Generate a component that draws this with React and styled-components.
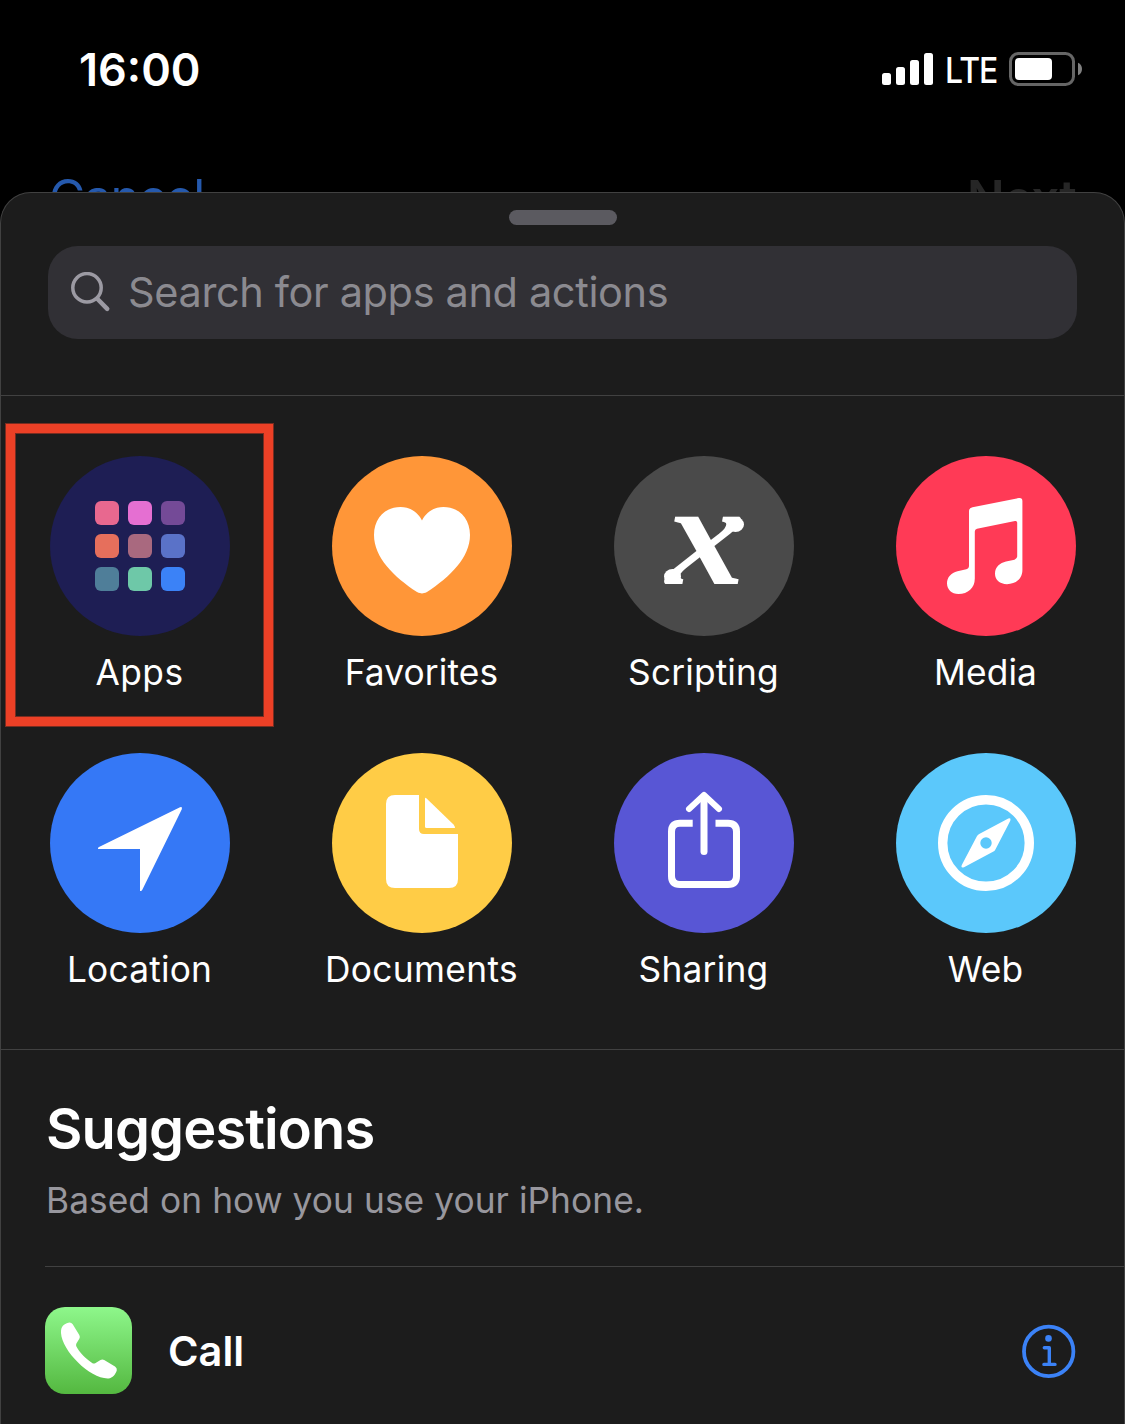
import React from "react";
import styled, { createGlobalStyle } from "styled-components";

const GlobalStyle = createGlobalStyle`
  * { box-sizing: border-box; }
  body { margin: 0; background: #000; }
`;

const Screen = styled.div`
  width: 1125px;
  height: 1424px;
  overflow: hidden;
  display: flex;
  flex-direction: column;
  background: #000;
  color: #fff;
  font-family: Inter, "Liberation Sans", sans-serif;
  white-space: nowrap;
`;

const Text = styled.span`
  font-size: ${(p) => p.$size}px;
  font-weight: ${(p) => p.$weight || 400};
  letter-spacing: ${(p) => p.$track || 0}px;
  line-height: ${(p) => p.$line}px;
  color: ${(p) => p.$color || "#fff"};
`;

const StatusBar = styled.header`
  flex: none;
  height: 138px;
  padding: 0 43px 0 79px;
  display: flex;
  justify-content: space-between;
`;

const StatusIcons = styled.div`
  height: 138px;
  display: flex;
  align-items: center;
`;

const Carrier = styled(Text)`
  width: 64px;
  margin-left: 12px;
  padding-top: 3px;
  transform: scaleX(0.9);
  transform-origin: left center;
`;

const NavBar = styled.nav`
  flex: none;
  height: 54px;
  overflow: hidden;
  padding: 25px 49px 0 49px;
  display: flex;
  justify-content: space-between;
`;

const Sheet = styled.main`
  flex: 1;
  display: flex;
  flex-direction: column;
  background: #1c1c1c;
  border: 1px solid #414141;
  border-bottom: 0;
  border-radius: 31px 31px 0 0;
`;

const SearchArea = styled.div`
  flex: none;
  height: 203px;
  padding: 17px 47px 0;
  display: flex;
  flex-direction: column;
  align-items: center;
  border-bottom: 1px solid #414141;
`;

const Handle = styled.div`
  width: 108px;
  height: 15px;
  border-radius: 8px;
  background: #5b5a60;
`;

const SearchField = styled.div`
  width: 1029px;
  height: 93px;
  margin-top: 21px;
  padding-left: 22px;
  display: flex;
  align-items: center;
  gap: 17px;
  border-radius: 30px;
  background: #313035;
`;

const Placeholder = styled(Text)`
  margin-bottom: 1px;
`;

const Categories = styled.section`
  flex: none;
  height: 654px;
  padding: 60px 48px 0 49px;
  display: grid;
  grid-template-columns: repeat(4, 180px);
  grid-template-rows: 297px 297px;
  justify-content: space-between;
  align-content: start;
  border-bottom: 1px solid #414141;
`;

const Category = styled.div`
  position: relative;
  display: flex;
  flex-direction: column;
  align-items: center;
`;

const Disc = styled.div`
  position: relative;
  width: 180px;
  height: 180px;
  border-radius: 50%;
  background: ${(p) => p.$color};
  display: flex;
  align-items: center;
  justify-content: center;
`;

const Label = styled(Text)`
  margin-top: 14px;
  margin-left: -1px;
`;

const Highlight = styled.div`
  position: absolute;
  left: -44px;
  top: -32px;
  width: 267px;
  height: 302px;
  border: 9px solid #ec4026;
  box-shadow: 0 0 0 1px rgba(236, 64, 38, 0.45), inset 0 0 0 1px rgba(236, 64, 38, 0.45);
`;

const AppGrid = styled.div`
  display: grid;
  grid-template-columns: repeat(3, 24px);
  grid-auto-rows: 24px;
  gap: 9px;
`;

const AppTile = styled.i`
  border-radius: 6px;
  background: ${(p) => p.$color};
`;

const Variable = styled.span`
  font: italic bold 146px/180px "Liberation Serif", serif;
  transform: translate(1px, -11px) scaleX(1.08);
`;

/* Round terminals at two ends of the variable sign. */
const Terminal = styled.i`
  position: absolute;
  left: ${(p) => p.$x}px;
  top: ${(p) => p.$y}px;
  width: 17px;
  height: 15px;
  border-radius: 50%;
  background: #fff;
`;

const Suggestions = styled.section`
  display: flex;
  flex-direction: column;
  padding-left: 44px;
`;

const SuggestionHeader = styled.div`
  height: 217px;
  padding: 49px 0 0 1px;
  display: flex;
  flex-direction: column;
  border-bottom: 1px solid #414141;
`;

const ActionRow = styled.div`
  height: 168px;
  padding-right: 48px;
  display: flex;
  align-items: center;
`;

const AppIcon = styled.div`
  width: 87px;
  height: 87px;
  margin: 0 36px 2px 0;
  border-radius: 20px;
  background: linear-gradient(#8ef78b, #54b840);
`;

const ActionName = styled(Text)`
  flex: 1;
`;

const TILES = ["#e8688f", "#e56fd2", "#744a97", "#e66f5c", "#a9697f", "#5a72c8", "#4f7e99", "#6ec8a8", "#3b82f7"];

const Glyph = ({ children }) => (
  <svg width="180" height="180" viewBox="0 0 180 180" fill="#fff">{children}</svg>
);

const Apps = () => (
  <AppGrid>{TILES.map((c) => <AppTile key={c} $color={c} />)}</AppGrid>
);

const Heart = () => (
  <Glyph>
    <path d="M90 64.5C86 56.5 78.5 51 68.5 51C53 51 42 62.5 42 79C42 101.5 62 121 85 136C87.3 137.1 88.6 137.4 90 137.4C91.4 137.4 92.7 137.1 95 136C118 121 138 101.5 138 79C138 62.5 127 51 111.5 51C101.5 51 94 56.5 90 64.5Z" />
  </Glyph>
);

const Music = () => (
  <Glyph>
    <path d="M76.5 51.2L122.8 42Q126.4 41.5 126.4 45V114C126.4 122.5 120 128.2 111 128.2C103.8 128.2 99 123.8 99 117.8C99 111 104 107 110 105.6L118.5 103.7Q121.2 102.9 121.2 100.3V66.8Q121.2 64.7 119 65.1L81 72.7Q78.8 73.2 78.8 75.5V122.5C78.8 132 72 138 62.5 138C55.5 138 51 133.5 51 127.3C51 121.5 55 116.8 61.5 115.3L70.3 113.3Q73 112.6 73 109.8V55Q73 52 76.5 51.2Z" />
  </Glyph>
);

const Location = () => (
  <Glyph>
    <path d="M130 54.3Q132.6 53.4 131.8 56.2L92.2 137Q91.6 138.4 90 138V96H48Q47.7 94.6 49 94Z" />
  </Glyph>
);

const Document = () => (
  <Glyph>
    <path d="M63 42H87V76Q87 81 92 81H126V126Q126 135 117 135H63Q54 135 54 126V51Q54 42 63 42Z" />
    <path d="M93 46Q93 44 94.6 45.4L121.5 71.5Q123 73 123 75H94.5Q93 75 93 73.5Z" />
  </Glyph>
);

const Share = () => (
  <Glyph>
    <g fill="none" stroke="#fff" strokeWidth="7">
      <path d="M78.7 70.2H66Q57.5 70.2 57.5 78.7V123Q57.5 131.5 66 131.5H114Q122.5 131.5 122.5 123V78.7Q122.5 70.2 114 70.2H101.5" />
      <path d="M90 44V98.5" strokeLinecap="round" />
      <path d="M75 56L90 42L105 56" strokeWidth="6" strokeLinecap="round" strokeLinejoin="round" />
    </g>
  </Glyph>
);

const Compass = () => (
  <Glyph>
    <circle cx="90" cy="90" r="43.3" fill="none" stroke="#fff" strokeWidth="9.4" />
    <path fillRule="evenodd" d="M112.3 65.6Q115.3 64.6 114.3 67.7L99.4 96.4Q98.6 98 97 98.8L68 114.2Q64.6 115.4 65.8 112L80.9 83.3Q81.7 81.8 83.2 80.9ZM90 84.3A5.7 5.7 0 1 0 90 95.7A5.7 5.7 0 1 0 90 84.3Z" />
  </Glyph>
);

const Script = () => (
  <>
    <Variable>x</Variable>
    <Terminal $x={50} $y={113} />
    <Terminal $x={113} $y={61} />
  </>
);

const CATEGORIES = [
  { name: "Apps", color: "#1e1e54", icon: Apps, track: 0.5, selected: true },
  { name: "Favorites", color: "#ff9638", icon: Heart, track: 0.15 },
  { name: "Scripting", color: "#4a4a4a", icon: Script, track: 0.15 },
  { name: "Media", color: "#ff3a56", icon: Music, track: 0.1 },
  { name: "Location", color: "#3578f6", icon: Location, track: 0.2 },
  { name: "Documents", color: "#ffcc46", icon: Document, track: 0.35 },
  { name: "Sharing", color: "#5856d5", icon: Share, track: 0.25 },
  { name: "Web", color: "#5bc8fb", icon: Compass, track: 0.1 },
];

const Signal = () => (
  <svg width="51" height="34" viewBox="0 0 51 34" fill="#fff">
    <rect x="0" y="21" width="9" height="12" rx="2.5" />
    <rect x="14" y="15" width="9" height="18" rx="2.5" />
    <rect x="28" y="8" width="9" height="25" rx="2.5" />
    <rect x="42" y="1" width="9" height="32" rx="2.5" />
  </svg>
);

const Battery = () => (
  <svg width="73" height="34" viewBox="0 0 73 34">
    <rect x="1.5" y="1.5" width="63" height="31" rx="8" fill="none" stroke="#666" strokeWidth="3" />
    <rect x="6" y="6" width="37" height="22" rx="4" fill="#fff" />
    <path d="M69 10.8Q73 12.5 73 17T69 23.2Z" fill="#808080" />
  </svg>
);

const Magnifier = () => (
  <svg width="41" height="41" viewBox="0 0 41 41" fill="none" stroke="#9c9aa3" strokeLinecap="round">
    <circle cx="17" cy="15.8" r="14.2" strokeWidth="3.5" />
    <path d="M27.5 27L37.2 36.8" strokeWidth="4.5" />
  </svg>
);

const Phone = () => (
  <svg width="87" height="87" viewBox="0 0 87 87" fill="#fff">
    <path d="M16 26C15.8 19 19 17.3 23.3 15.8Q26 15 27.7 17.2L34.3 28Q35.4 30 34.3 31.8L31.4 36.6Q30.7 38 31.3 39.3C33.5 44.5 42.5 53.5 47.5 56.2Q48.8 56.9 50.2 56.2L55.5 53Q57.3 52 59.2 53L70 59.4Q72.2 60.8 71.8 63.2C70.8 67 67.5 71.2 63.5 71.4C45.5 72.3 17 44 16 26Z" />
  </svg>
);

const Info = () => (
  <svg width="54" height="55" viewBox="0 -1 54 55" fill="none" stroke="#3b82f7">
    <circle cx="26.7" cy="26.4" r="24.7" strokeWidth="3.8" />
    <circle cx="26.5" cy="13.4" r="3.3" fill="#3b82f7" stroke="none" />
    <path d="M22.3 22.8H27.3V39.4M21.9 39.4H33" strokeWidth="3.4" strokeLinecap="round" strokeLinejoin="round" />
  </svg>
);

export default function App() {
  return (
    <Screen>
      <GlobalStyle />
      <StatusBar>
        <Text $size={45} $weight={600} $line={139}>16:00</Text>
        <StatusIcons>
          <Signal />
          <Carrier $size={35.5} $weight={500} $line={40} $track={-1}>LTE</Carrier>
          <Battery />
        </StatusIcons>
      </StatusBar>
      <NavBar>
        <Text $size={49.5} $line={68} $track={-1.2} $color="#2559ad">Cancel</Text>
        <Text $size={49.5} $weight={600} $line={71} $track={-0.8} $color="#262626">Next</Text>
      </NavBar>
      <Sheet>
        <SearchArea>
          <Handle />
          <SearchField>
            <Magnifier />
            <Placeholder $size={41.5} $line={60} $track={-0.37} $color="#8b8a90">Search for apps and actions</Placeholder>
          </SearchField>
        </SearchArea>
        <Categories>
          {CATEGORIES.map(({ name, color, icon: Icon, track, selected }) => (
            <Category key={name}>
              <Disc $color={color}><Icon /></Disc>
              <Label $size={35.3} $line={46} $track={track}>{name}</Label>
              {selected && <Highlight />}
            </Category>
          ))}
        </Categories>
        <Suggestions>
          <SuggestionHeader>
            <Text $size={56} $weight={600} $line={60} $track={-0.9}>Suggestions</Text>
            <Text $size={35.3} $line={84} $track={0.06} $color="#98979e">Based on how you use your iPhone.</Text>
          </SuggestionHeader>
          <ActionRow>
            <AppIcon><Phone /></AppIcon>
            <ActionName $size={41.5} $weight={600} $line={60}>Call</ActionName>
            <Info />
          </ActionRow>
        </Suggestions>
      </Sheet>
    </Screen>
  );
}
